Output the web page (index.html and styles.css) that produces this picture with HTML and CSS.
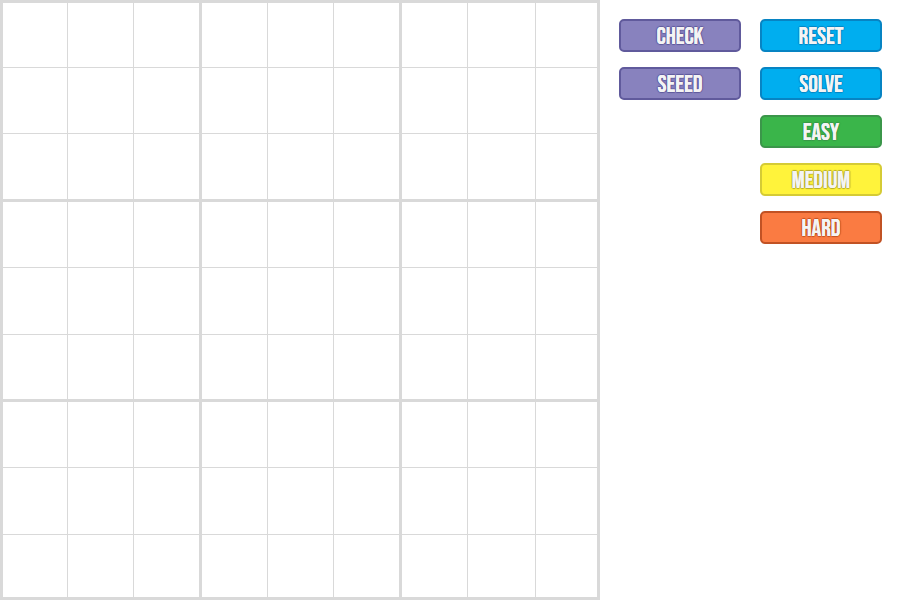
FILE: index.html
```html
<!DOCTYPE html>
<html lang="en">
<head>
<meta charset="utf-8">
<title>Sudoku</title>
<link rel="stylesheet" href="styles.css">
</head>
<body>
<main class="game">
  <div class="board" id="board"></div>
  <div class="controls">
    <div class="group">
      <button class="btn purple" type="button">CHECK</button>
      <button class="btn purple" type="button">SEEED</button>
    </div>
    <div class="group">
      <button class="btn blue" type="button">RESET</button>
      <button class="btn blue" type="button">SOLVE</button>
      <button class="btn green" type="button">EASY</button>
      <button class="btn yellow" type="button">MEDIUM</button>
      <button class="btn orange" type="button">HARD</button>
    </div>
  </div>
</main>
<script src="board.js"></script>
</body>
</html>
```
FILE: styles.css
```css
* {
  box-sizing: border-box;
}

body {
  margin: 0;
  background: #fff;
}

.game {
  display: flex;
  align-items: flex-start;
}

.board {
  flex: none;
  display: grid;
  grid-template-columns: 65fr 66fr 68fr 66fr 66fr 68fr 66fr 68fr 61fr;
  grid-template-rows: 65fr 66fr 68fr 66fr 67fr 67fr 66fr 67fr 62fr;
  height: 100vh;
  aspect-ratio: 1;
  border: 3px solid #d9d9d9;
}

.cell {
  width: 100%;
  height: 100%;
  min-width: 0;
  min-height: 0;
  margin: 0;
  padding: 0;
  border: 0 solid #d9d9d9;
  border-right-width: 1px;
  border-bottom-width: 1px;
  border-radius: 0;
  background: #fff;
  font: 32px "Liberation Sans", sans-serif;
  text-align: center;
}

.cell.box-right {
  border-right-width: 3px;
}

.cell.box-bottom {
  border-bottom-width: 3px;
}

.cell.last-column {
  border-right-width: 0;
}

.cell.last-row {
  border-bottom-width: 0;
}

.controls {
  flex: 1;
  display: flex;
  align-items: flex-start;
  gap: 19px;
  padding: 19px;
}

.group {
  flex: 1;
  display: flex;
  flex-direction: column;
  gap: 15px;
}

.btn {
  height: 33px;
  padding: 2px 0 0;
  border: 2px solid var(--edge);
  border-radius: 5px;
  background: var(--fill);
  color: #f4f4f4;
  font: 400 24px/27px "Bebas Neue", "Liberation Sans Narrow", "Liberation Sans", sans-serif;
  text-shadow: 0 0 #f4f4f4, 1px 0 1px var(--shade), -1px 0 1px var(--shade), 0 1px 1px var(--shade), 0 -1px 1px var(--shade);
}

.purple {
  --fill: #8882be;
  --edge: #605a9c;
  --shade: #605a9c;
}

.blue {
  --fill: #00aeef;
  --edge: #0784c3;
  --shade: #0784c3;
}

.green {
  --fill: #3ab54a;
  --edge: #3b964a;
  --shade: #3b964a;
}

.yellow {
  --fill: #fff33b;
  --edge: #d5cb35;
  --shade: #b5ab30;
}

.orange {
  --fill: #fa7b42;
  --edge: #c15224;
  --shade: #c15224;
}
```
FILE: board.js
```js
const board = document.getElementById("board");

for (let row = 0; row < 9; row++) {
  for (let column = 0; column < 9; column++) {
    const cell = document.createElement("input");
    cell.className = "cell";
    cell.maxLength = 1;
    cell.inputMode = "numeric";
    cell.setAttribute("aria-label", `Row ${row + 1}, column ${column + 1}`);
    cell.classList.toggle("box-right", column === 2 || column === 5);
    cell.classList.toggle("box-bottom", row === 2 || row === 5);
    cell.classList.toggle("last-column", column === 8);
    cell.classList.toggle("last-row", row === 8);
    board.append(cell);
  }
}
```
